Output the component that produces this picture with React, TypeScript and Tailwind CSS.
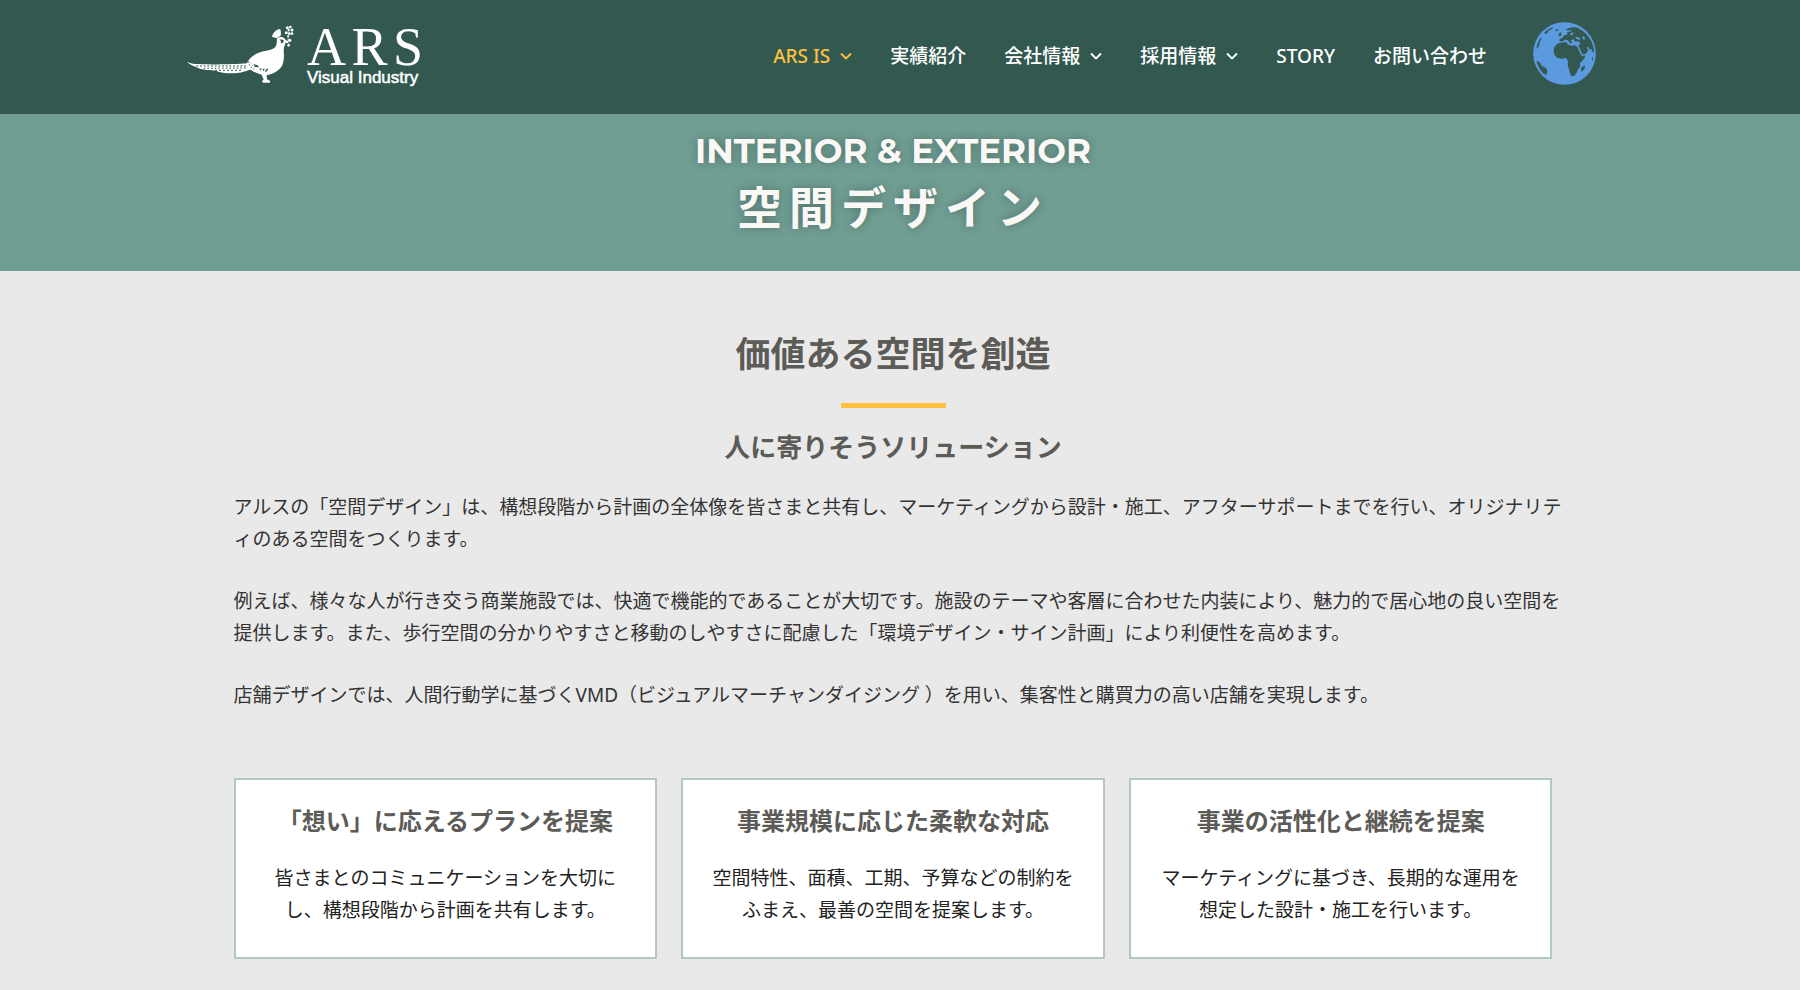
import React from "react";

type NavItem = { label: string; submenu?: boolean; active?: boolean };

const navItems: NavItem[] = [
  { label: "ARS IS", submenu: true, active: true },
  { label: "実績紹介" },
  { label: "会社情報", submenu: true },
  { label: "採用情報", submenu: true },
  { label: "STORY" },
  { label: "お問い合わせ" },
];

const paragraphs = [
  "アルスの「空間デザイン」は、構想段階から計画の全体像を皆さまと共有し、マーケティングから設計・施工、アフターサポートまでを行い、オリジナリティのある空間をつくります。",
  "例えば、様々な人が行き交う商業施設では、快適で機能的であることが大切です。施設のテーマや客層に合わせた内装により、魅力的で居心地の良い空間を提供します。また、歩行空間の分かりやすさと移動のしやすさに配慮した「環境デザイン・サイン計画」により利便性を高めます。",
  "店舗デザインでは、人間行動学に基づくVMD（ビジュアルマーチャンダイジング ）を用い、集客性と購買力の高い店舗を実現します。",
];

const cards = [
  {
    title: "「想い」に応えるプランを提案",
    lines: ["皆さまとのコミュニケーションを大切に", "し、構想段階から計画を共有します。"],
  },
  {
    title: "事業規模に応じた柔軟な対応",
    lines: ["空間特性、面積、工期、予算などの制約を", "ふまえ、最善の空間を提案します。"],
  },
  {
    title: "事業の活性化と継続を提案",
    lines: ["マーケティングに基づき、長期的な運用を", "想定した設計・施工を行います。"],
  },
];

function Bird() {
  return (
    <svg viewBox="12 15 330 180" className="h-[60px] w-[110px]" fill="#fff" aria-hidden="true">
      <path d="M10 124 C20 130 30 132 46 132 C80 134 150 134 192 130 C198 114 215 99 245 93 C268 90 280 84 281 70 L282 56 C288 49 300 49 305 56 L312 64 L307 70 C306 76 302 82 302 92 C304 108 303 124 297 138 C290 150 276 158 262 163 L251 166 L252 178 L262 183 L260 188 L240 188 L237 183 L242 179 L236 164 C222 160 212 156 203 149 C192 150 186 156 168 158 C145 161 118 160 98 152 C84 149 62 152 44 143 C32 137 22 136 10 124 Z" />
      <path d="M267 50 C270 38 280 28 291 27 C295 32 293 38 294 45 C290 50 284 53 280 55 C276 53 272 52 267 50 Z" />
      <g stroke="#325850" strokeWidth="3" fill="none">
        <path d="M40 138 L190 138" strokeDasharray="6 5" />
        <path d="M62 145 L192 144" strokeDasharray="5 6" />
        <path d="M96 151 L180 151" strokeDasharray="6 6" />
        <path d="M196 124 C198 134 202 142 212 148" strokeDasharray="4 5" />
        <path d="M203 128 C206 136 214 142 220 148" strokeDasharray="3 6" strokeWidth="2" />
      </g>
      <g fill="#325850">
        <path d="M211 132 L224 136 L228 142 L216 141 Z" />
        <path d="M229 145 L236 146 L232 152 Z" />
        <path d="M239 146 L246 147 L240 154 Z" />
        <path d="M249 148 L256 145 L252 154 L246 156 Z" />
        <path d="M289 58 L302 60 L301 68 L293 70 L294 64 Z" />
      </g>
      <g>
        <circle cx="313" cy="23" r="4.500" />
        <circle cx="322" cy="21" r="4" />
        <circle cx="317" cy="30" r="3.500" />
        <circle cx="327" cy="30" r="4.500" />
        <circle cx="310" cy="38" r="4.500" />
        <circle cx="319" cy="41" r="4" />
        <circle cx="327" cy="41" r="4" />
        <circle cx="315" cy="49" r="3" />
        <circle cx="320" cy="61" r="5" />
        <circle cx="312" cy="66" r="3.500" />
        <circle cx="317" cy="76" r="4" />
      </g>
      <path d="M317 26 L318 44 L314 62 L317 76" stroke="#fff" strokeWidth="1.500" fill="none" />
    </svg>
  );
}

function Globe() {
  return (
    <svg viewBox="24 21 189 189" className="size-[63px]" aria-hidden="true">
      <circle cx="118.500" cy="115.500" r="94" fill="#5c9ae0" />
      <g fill="#325850">
        <path d="M86 104 C88 92 96 85 106 83 L124 81 L128 88 L138 92 L150 91 L157 96 L164 112 L170 123 L181 121 C180 130 172 138 165 145 L165 156 L158 164 L156 172 L148 182 L139 184 L134 172 L131 160 L128 150 L129 138 L123 129 L108 131 L96 128 L87 117 Z" />
        <path d="M122 44 C130 38 142 35 152 37 C178 46 198 68 206 98 L207 112 L203 112 L199 101 L194 104 L190 96 L184 97 L190 106 L182 117 L172 118 L165 103 L160 92 L166 86 L162 79 L150 80 L146 72 L138 76 L142 84 L136 85 L128 75 L119 74 L114 79 L104 79 L104 71 L112 70 L116 62 L128 57 L126 51 L136 50 L140 44 L130 47 Z" />
        <path d="M101 57 L106 51 L110 59 L106 64 L100 63 Z" />
        <path d="M91 44 L98 42 L100 47 L93 49 Z" />
        <path d="M57 54 C65 45 75 39 86 36 L80 43 L70 48 L64 57 Z" />
        <path d="M34 102 C36 88 41 76 48 67 L50 72 L44 81 L43 91 L37 99 Z" />
        <path d="M34 137 L44 142 L50 152 L64 160 L67 171 L64 180 L54 175 C45 165 38 152 34 137 Z" />
        <path d="M168 158 L180 151 L179 161 L170 171 Z" />
        <path d="M201 125 L205 132 L201 138 Z" />
      </g>
      <g fill="#5c9ae0">
        <path d="M151 66 L160 66 L168 72 L162 74 L153 71 Z" />
        <path d="M137 54 L147 52 L142 60 L135 61 Z" />
        <path d="M174 62 L180 68 L178 76 L172 70 Z" />
      </g>
    </svg>
  );
}

function Chevron() {
  return (
    <svg viewBox="0 0 12 8" className="h-2 w-3" fill="none" stroke="currentColor" strokeWidth="1.800" aria-hidden="true">
      <path d="M1 1.500 L6 6.500 L11 1.500" />
    </svg>
  );
}

export default function App() {
  return (
    <div className="min-h-screen bg-[#e9e9e9] font-['Noto_Sans','Noto_Sans_CJK_JP',sans-serif] text-[19px] leading-8 text-[#333]">
      <header className="bg-[#325850] pr-[14px]">
        <div className="mx-auto flex h-[114px] max-w-[1412px] items-start justify-between pr-[3px]">
          <a href="#" className="mt-[25px] flex text-white">
            <Bird />
            <span className="ml-[10px] flex w-[116px] flex-col">
              <span className="flex h-[44px] justify-between font-['Liberation_Serif',serif] text-[54px] leading-[44px]">
                <span>A</span>
                <span>R</span>
                <span>S</span>
              </span>
              <span className="whitespace-nowrap font-['Liberation_Sans',sans-serif] text-[17px] leading-[18px] [-webkit-text-stroke:0.5px_#fff]">
                Visual Industry
              </span>
            </span>
          </a>
          <nav className="mt-[22px] flex items-start">
            <ul className="mt-[18px] flex gap-[38px] font-medium text-white">
              {navItems.map((item) => (
                <li key={item.label}>
                  <a
                    href="#"
                    className={
                      item.active ? "flex items-center gap-[10px] text-[#ffc03d]" : "flex items-center gap-[10px]"
                    }
                  >
                    {item.label}
                    {item.submenu && <Chevron />}
                  </a>
                </li>
              ))}
            </ul>
            <a href="#" aria-label="Language" className="ml-[46px]">
              <Globe />
            </a>
          </nav>
        </div>
      </header>

      <section className="h-[157px] bg-[#709e93] pt-[14px] pr-[14px] text-center font-bold text-[#faf8f5] [text-shadow:0_0_10px_rgba(0,0,0,0.3)]">
        <p className="font-['Montserrat','Inter',sans-serif] text-[34px] leading-[46px]">INTERIOR &amp; EXTERIOR</p>
        <h1 className="text-[45px] leading-[68px] tracking-[7px]">空間デザイン</h1>
      </section>

      <main className="pr-[14px] pb-8">
        <div className="mx-auto max-w-[1319px]">
          <h2 className="pt-[57px] text-center text-[35px] leading-[52px] font-bold text-[#5c5b57]">
            価値ある空間を創造
          </h2>
          <div className="mx-auto mt-[23px] h-[5px] w-[105px] bg-[#ffc03d]" />
          <h3 className="mt-[19px] text-center text-[26px] leading-10 font-bold text-[#5c5b57]">
            人に寄りそうソリューション
          </h3>
          <div className="-mr-3 mt-6 space-y-[30px]">
            {paragraphs.map((text) => (
              <p key={text}>{text}</p>
            ))}
          </div>
          <div className="mt-[67px] grid grid-cols-3 gap-6">
            {cards.map((card) => (
              <article key={card.title} className="border-2 border-[#b2c9c2] bg-white pt-[23px] pb-[31px] text-center">
                <h4 className="text-[24px] leading-9 font-bold text-[#5c5b57]">{card.title}</h4>
                <p className="mt-[23px] whitespace-nowrap text-[#222]">
                  {card.lines[0]}
                  <br />
                  {card.lines[1]}
                </p>
              </article>
            ))}
          </div>
        </div>
      </main>
    </div>
  );
}
